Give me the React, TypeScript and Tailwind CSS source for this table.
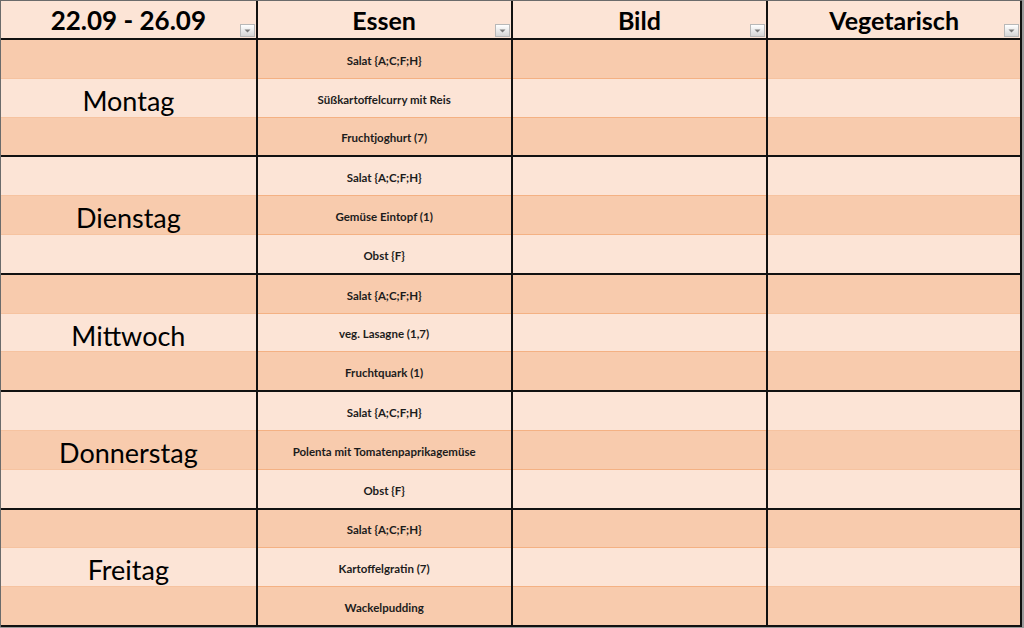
import React from 'react';

const days = [
  { name: 'Montag', meals: ['Salat {A;C;F;H}', 'Süßkartoffelcurry mit Reis', 'Fruchtjoghurt (7)'] },
  { name: 'Dienstag', meals: ['Salat {A;C;F;H}', 'Gemüse Eintopf (1)', 'Obst {F}'] },
  { name: 'Mittwoch', meals: ['Salat {A;C;F;H}', 'veg. Lasagne (1,7)', 'Fruchtquark (1)'] },
  { name: 'Donnerstag', meals: ['Salat {A;C;F;H}', 'Polenta mit Tomatenpaprikagemüse', 'Obst {F}'] },
  { name: 'Freitag', meals: ['Salat {A;C;F;H}', 'Kartoffelgratin (7)', 'Wackelpudding'] },
];

const cols = ['w-[257px]', 'w-[255px]', 'w-[256px]', 'w-[254px]'];

// little excel filter arrow in the header cells
const FilterButton = () => (
  <div className="absolute right-[1px] bottom-[1px] w-[15px] h-[13px] border border-[#b8b8b8] bg-gradient-to-b from-white to-[#d6d6d6] flex items-center justify-center">
    <svg width="7" height="4" viewBox="0 0 7 4">
      <path d="M0.5 0.5 L6.5 0.5 L3.5 3.5 Z" fill="#7a7a7a" />
    </svg>
  </div>
);

const stripe = (idx: number) => (idx % 2 === 0 ? 'bg-[#f8cbad]' : 'bg-[#fce4d6]');

export default function App() {
  const headers = ['22.09 - 26.09', 'Essen', 'Bild', 'Vegetarisch'];

  return (
    <div className="w-[1024px] h-[628px] bg-[#9a9a9a] overflow-hidden" style={{ fontFamily: 'Lato, "Open Sans", sans-serif' }}>
      <div className="w-[1022px] h-[627px] border-l border-t border-[#6b6b6b] flex flex-col text-black">
        {/* header */}
        <div className="flex h-[39px] shrink-0 border-b-2 border-[#111]">
          {headers.map((h, i) => (
            <div
              key={h}
              className={`${cols[i]} relative bg-[#fce4d6] border-r-2 border-[#111] flex items-center justify-center font-bold ${i === 0 ? 'text-[26px]' : 'text-[25px]'} leading-none pt-[1px]`}
            >
              {h}
              <FilterButton />
            </div>
          ))}
        </div>

        {/* day blocks */}
        {days.map((day, d) => (
          <div key={day.name} className="flex flex-1 border-b-2 border-[#111]">
            <div className={`${cols[0]} border-r-2 border-[#111] flex flex-col`}>
              {[0, 1, 2].map(r => (
                <div
                  key={r}
                  className={`flex-1 ${stripe(d * 3 + r)} ${r < 2 ? 'border-b border-[#f6c3a0]' : ''} flex items-center justify-center text-[27px] leading-none pt-[5px]`}
                >
                  {r === 1 ? day.name : ''}
                </div>
              ))}
            </div>
            <div className={`${cols[1]} border-r-2 border-[#111] flex flex-col`}>
              {day.meals.map((m, r) => (
                <div
                  key={r}
                  className={`flex-1 ${stripe(d * 3 + r)} ${r < 2 ? 'border-b border-[#f4b183]' : ''} flex items-center justify-center text-[11.5px] font-bold text-[#1c1c1c] pt-[3px]`}
                >
                  {m}
                </div>
              ))}
            </div>
            <div className={`${cols[2]} border-r-2 border-[#111] flex flex-col`}>
              {[0, 1, 2].map(r => (
                <div key={r} className={`flex-1 ${stripe(d * 3 + r)} ${r < 2 ? 'border-b border-[#f4b183]' : ''}`} />
              ))}
            </div>
            <div className={`${cols[3]} border-r-2 border-[#111] flex flex-col`}>
              {[0, 1, 2].map(r => (
                <div key={r} className={`flex-1 ${stripe(d * 3 + r)} ${r < 2 ? 'border-b border-[#f6c3a0]' : ''}`} />
              ))}
            </div>
          </div>
        ))}
      </div>
    </div>
  );
}
